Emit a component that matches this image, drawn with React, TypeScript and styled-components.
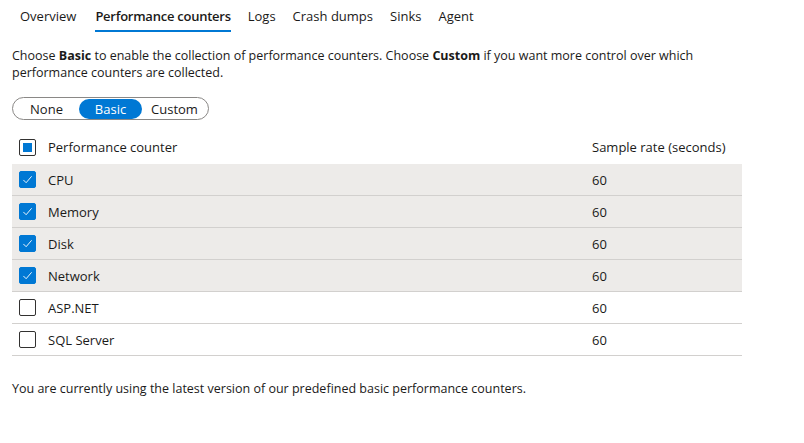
import React, { useState } from "react";
import styled, { createGlobalStyle } from "styled-components";

const GlobalStyle = createGlobalStyle`
  body {
    margin: 0;
    background: #fff;
    font-family: "Segoe UI", "Open Sans", sans-serif;
    color: #1b1a19;
  }
`;

const Page = styled.div`
  width: 804px;
  height: 443px;
  padding: 0 12px;
  box-sizing: border-box;
`;

const Tabs = styled.ul`
  display: flex;
  list-style: none;
  margin: 0;
  padding: 0 0 0 8px;
  height: 32px;
`;

const Tab = styled.li<{ $active?: boolean }>`
  font-size: 13px;
  padding: 7px 0 0;
  margin-right: 17px;
  height: 32px;
  box-sizing: border-box;
  font-weight: ${(p) => (p.$active ? 600 : 400)};
  letter-spacing: ${(p) => (p.$active ? "-0.25px" : "0")};
  color: #1b1a19;
  border-bottom: 2px solid ${(p) => (p.$active ? "#0078d4" : "transparent")};
  cursor: pointer;
  &:first-child {
    margin-right: 19px;
  }
`;

const Description = styled.p`
  font-size: 12.5px;
  line-height: 17px;
  margin: 15px 0 0;
  b {
    font-weight: 700;
  }
`;

const Toggle = styled.div`
  display: flex;
  width: fit-content;
  align-items: center;
  gap: 1px;
  margin-top: 16px;
  height: 23px;
  box-sizing: border-box;
  border: 1px solid #8a8886;
  border-radius: 12px;
  padding: 0 2px;
`;

const ToggleOption = styled.button<{ $active?: boolean }>`
  border: none;
  width: 63px;
  padding: 0;
  font-family: inherit;
  font-size: 13px;
  height: 20px;
  border-radius: 10px;
  background: ${(p) => (p.$active ? "#0078d4" : "transparent")};
  color: ${(p) => (p.$active ? "#fff" : "#1b1a19")};
  cursor: pointer;
`;

const Table = styled.div`
  width: 730px;
  margin-top: 10px;
`;

const Row = styled.div<{ $checked?: boolean; $header?: boolean }>`
  display: grid;
  grid-template-columns: 29px 544px 1fr;
  align-items: center;
  height: ${(p) => (p.$header ? 34 : 32)}px;
  box-sizing: border-box;
  padding-left: 7px;
  font-size: 13px;
  background: ${(p) => (p.$checked ? "#edebe9" : "#fff")};
  border-bottom: ${(p) => (p.$header ? "none" : "1px solid #d2d0ce")};
`;

const Box = styled.span<{ $checked?: boolean }>`
  width: 17px;
  height: 17px;
  box-sizing: border-box;
  border-radius: 2px;
  border: 1px solid ${(p) => (p.$checked ? "#0078d4" : "#323130")};
  background: ${(p) => (p.$checked ? "#0078d4" : "#fff")};
  display: flex;
  align-items: center;
  justify-content: center;
`;

const Indeterminate = styled.span`
  width: 9px;
  height: 9px;
  background: #0078d4;
`;

const Cell = styled.span`
  color: #1b1a19;
`;

const Footer = styled.p`
  font-size: 12.5px;
  line-height: 17px;
  margin: 24px 0 0;
`;

const Check = () => (
  <svg width="11" height="11" viewBox="0 0 12 12" fill="none">
    <path d="M1.5 6.5 L4.5 9.5 L10.5 2.5" stroke="#fff" strokeWidth="1" />
  </svg>
);

const counters = [
  { name: "CPU", rate: 60, on: true },
  { name: "Memory", rate: 60, on: true },
  { name: "Disk", rate: 60, on: true },
  { name: "Network", rate: 60, on: true },
  { name: "ASP.NET", rate: 60, on: false },
  { name: "SQL Server", rate: 60, on: false },
];

const tabs = ["Overview", "Performance counters", "Logs", "Crash dumps", "Sinks", "Agent"];

export default function App() {
  const [mode, setMode] = useState("Basic");

  return (
    <Page>
      <GlobalStyle />
      <Tabs>
        {tabs.map((t) => (
          <Tab key={t} $active={t === "Performance counters"}>
            {t}
          </Tab>
        ))}
      </Tabs>
      <Description>
        Choose <b>Basic</b> to enable the collection of performance counters. Choose <b>Custom</b> if you want more control over which
        <br />
        performance counters are collected.
      </Description>
      <Toggle>
        {["None", "Basic", "Custom"].map((m) => (
          <ToggleOption key={m} $active={mode === m} onClick={() => setMode(m)}>
            {m}
          </ToggleOption>
        ))}
      </Toggle>
      <Table>
        <Row $header>
          <Box>
            <Indeterminate />
          </Box>
          <Cell>Performance counter</Cell>
          <Cell>Sample rate (seconds)</Cell>
        </Row>
        {counters.map((c) => (
          <Row key={c.name} $checked={c.on}>
            <Box $checked={c.on}>{c.on && <Check />}</Box>
            <Cell>{c.name}</Cell>
            <Cell>{c.rate}</Cell>
          </Row>
        ))}
      </Table>
      <Footer>You are currently using the latest version of our predefined basic performance counters.</Footer>
    </Page>
  );
}
